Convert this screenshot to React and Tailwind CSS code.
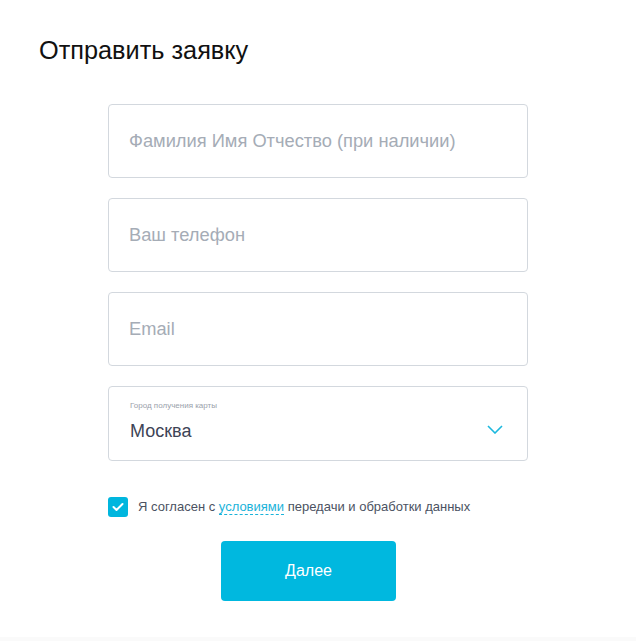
const Field = ({ placeholder }) => (
  <div className="h-[74px] w-[420px] rounded-[4px] border border-[#d3d8de] flex items-center px-[20px]">
    <span className="text-[18.3px] text-[#a5acb6]">{placeholder}</span>
  </div>
);

const App = () => {
  return (
    <div className="w-[636px] h-[641px] bg-white font-['Liberation_Sans',Arial,sans-serif] flex flex-col">
      <div className="flex-1 pl-[39px] pt-[34px]">
        <h1 className="text-[25.3px] leading-[32px] text-[#111] font-light">Отправить заявку</h1>

        <div className="ml-[69px] mt-[38px] flex flex-col gap-[20px]">
          <Field placeholder="Фамилия Имя Отчество (при наличии)" />
          <Field placeholder="Ваш телефон" />
          <Field placeholder="Email" />

          <div className="h-[75px] w-[420px] rounded-[4px] border border-[#d3d8de] flex items-center pl-[21px] pr-[24px]">
            <div className="flex-1 flex flex-col">
              <span className="text-[8px] leading-[10px] text-[#9aa1ab] mt-[-4px]">Город получения карты</span>
              <span className="text-[18px] leading-[22px] text-[#3d4456] mt-[9px]">Москва</span>
            </div>
            <svg width="16" height="9" viewBox="0 0 16 9" className="mt-[11px]">
              <path d="M1 1l7 7 7-7" fill="none" stroke="#1cb8de" strokeWidth="1.6" />
            </svg>
          </div>
        </div>

        <div className="ml-[69px] mt-[36px] flex items-center gap-[10px]">
          <div className="w-[20px] h-[20px] rounded-[3px] bg-[#00b6de] flex items-center justify-center">
            <svg width="12" height="10" viewBox="0 0 12 10">
              <path d="M1.5 5l3 3 6-6" fill="none" stroke="white" strokeWidth="2" strokeLinecap="round" strokeLinejoin="round" />
            </svg>
          </div>
          <span className="text-[13px] text-[#4b5262]">
            Я согласен с{" "}
            <span className="text-[#1ab3da] border-b border-dashed border-[#1ab3da]">условиями</span>{" "}
            передачи и обработки данных
          </span>
        </div>

        <button className="ml-[182px] mt-[24px] w-[175px] h-[60px] rounded-[4px] bg-[#00b8df] text-white text-[16px] font-light">
          Далее
        </button>
      </div>
      <div className="h-[4px] bg-[#fafafa]" />
    </div>
  );
};

export default App;
